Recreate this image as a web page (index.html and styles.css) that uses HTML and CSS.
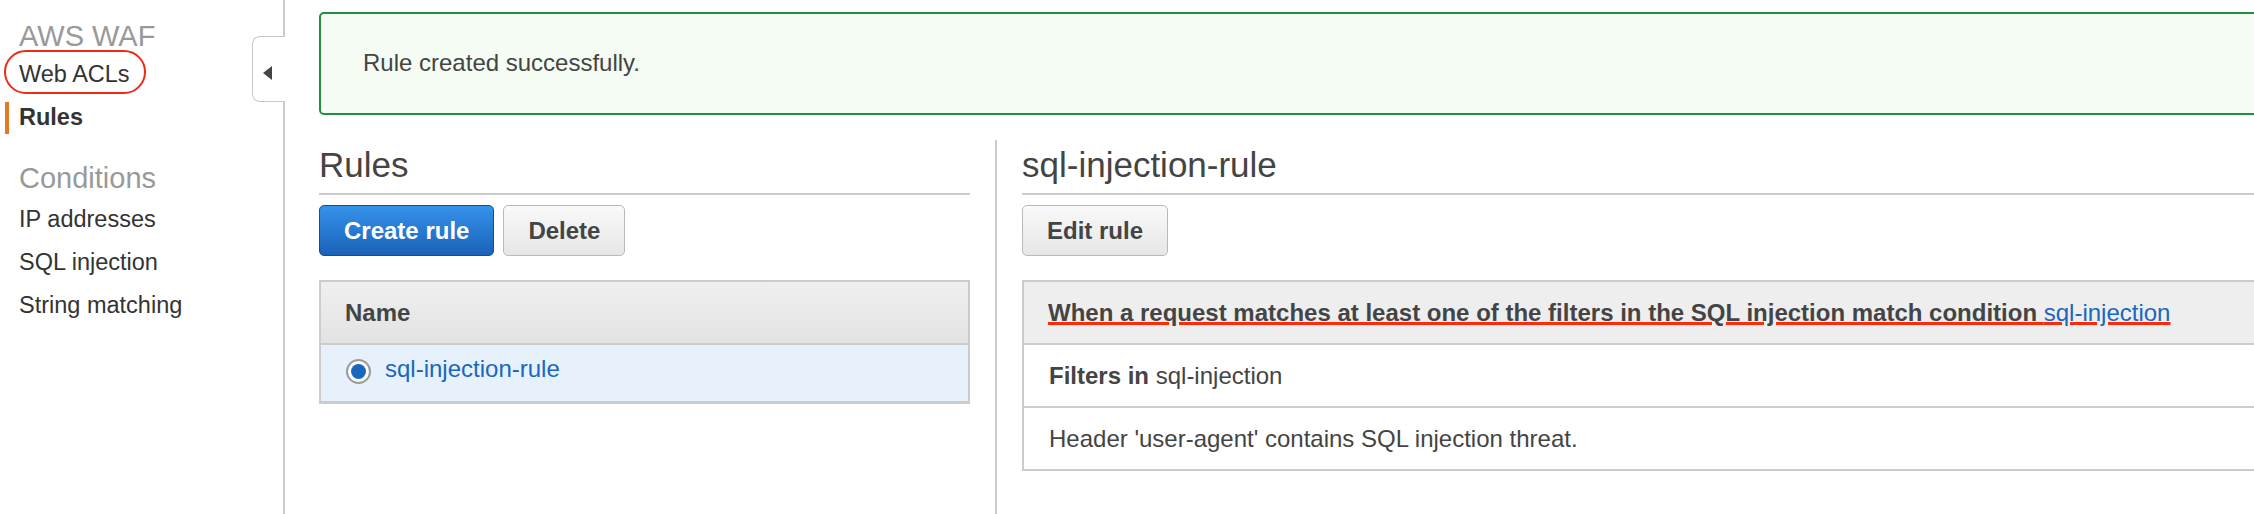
FILE: index.html
```html
<!DOCTYPE html>
<html lang="en">
<head>
<meta charset="utf-8">
<title>AWS WAF - Rules</title>
<link rel="stylesheet" href="styles.css">
</head>
<body>
<div class="app">
  <aside class="sidebar">
    <div class="nav-title">AWS WAF</div>
    <ul class="nav-list">
      <li class="nav-item circled">Web ACLs<span class="annot-circle"></span></li>
      <li class="nav-item active">Rules</li>
    </ul>
    <div class="nav-title conditions">Conditions</div>
    <ul class="nav-list second">
      <li class="nav-item">IP addresses</li>
      <li class="nav-item">SQL injection</li>
      <li class="nav-item">String matching</li>
    </ul>
    <div class="collapse-tab"><span class="tri"></span></div>
  </aside>
  <main class="main">
    <div class="alert">Rule created successfully.</div>
    <div class="columns">
      <section class="col-left">
        <h1 class="heading">Rules</h1>
        <div class="toolbar">
          <button class="btn btn-primary">Create rule</button>
          <button class="btn">Delete</button>
        </div>
        <div class="table">
          <div class="thead">Name</div>
          <div class="trow selected">
            <span class="radio"><span class="dot"></span></span>
            <a class="link">sql-injection-rule</a>
          </div>
        </div>
      </section>
      <section class="col-right">
        <h1 class="heading">sql-injection-rule</h1>
        <div class="toolbar">
          <button class="btn">Edit rule</button>
        </div>
        <div class="table wide">
          <div class="thead flat"><span class="redline">When a request matches at least one of the filters in the SQL injection match condition <a class="link">sql-injection</a></span></div>
          <div class="trow plain"><b>Filters in</b> sql-injection</div>
          <div class="trow plain">Header 'user-agent' contains SQL injection threat.</div>
        </div>
      </section>
    </div>
  </main>
</div>
</body>
</html>
```
FILE: styles.css
```css
html, body {
  margin: 0;
  padding: 0;
  overflow: hidden;
  background: #fff;
}
body {
  font-family: "Liberation Sans", Arial, Helvetica, sans-serif;
  font-size: 24px;
  color: #444;
}
.app {
  display: flex;
  height: 514px;
}
.sidebar {
  position: relative;
  flex: 0 0 285px;
  width: 285px;
  border-right: 2px solid #ccc;
  padding: 20px 0 0 19px;
  box-sizing: border-box;
}
.nav-title {
  font-size: 29px;
  line-height: 32px;
  color: #999;
}
.nav-title.conditions {
  margin-top: 29px;
}
.nav-list {
  list-style: none;
  margin: 6px 0 0 0;
  padding: 0;
}
.nav-list.second {
  margin-top: 9px;
}
.nav-item {
  position: relative;
  font-size: 23.5px;
  line-height: 32px;
  height: 32px;
  margin-bottom: 11px;
  color: #333;
}
.nav-item.active {
  font-weight: bold;
}
.nav-item.active::before {
  content: "";
  position: absolute;
  left: -14px;
  top: 1px;
  width: 4px;
  height: 32px;
  background: #e07b24;
}
.annot-circle {
  position: absolute;
  left: -15px;
  top: -8px;
  width: 142px;
  height: 44px;
  box-sizing: border-box;
  border: 2.5px solid #ec2b17;
  border-radius: 22px;
}
.collapse-tab {
  position: absolute;
  right: -2px;
  top: 36px;
  width: 33px;
  height: 66px;
  box-sizing: border-box;
  background: #fff;
  border: 1.5px solid #c8c8c8;
  border-right: none;
  border-radius: 8px 0 0 8px;
  display: flex;
  align-items: center;
  justify-content: center;
  padding: 8px 4px 0 0;
}
.tri {
  width: 0;
  height: 0;
  border-top: 7.5px solid transparent;
  border-bottom: 7.5px solid transparent;
  border-right: 9px solid #444;
}
.main {
  flex: 1;
  display: flex;
  flex-direction: column;
  padding-left: 34px;
  min-width: 0;
}
.alert {
  margin-top: 12px;
  width: 2400px;
  box-sizing: border-box;
  height: 103px;
  border: 2px solid #1f913b;
  border-radius: 5px;
  background: #f5fcf4;
  padding: 35px 42px 0;
  line-height: 28px;
  color: #444;
}
.columns {
  flex: 1;
  display: flex;
  margin-top: 25px;
}
.col-left {
  flex: 0 0 651px;
  width: 651px;
  margin-right: 25px;
  padding-top: 5px;
}
.col-right {
  flex: 0 0 1400px;
  border-left: 2px solid #ccc;
  padding: 5px 0 0 25px;
}
.heading {
  margin: 0;
  font-size: 35px;
  font-weight: normal;
  line-height: 40px;
  color: #444;
  padding-bottom: 8px;
  border-bottom: 2px solid #ccc;
}
.toolbar {
  display: flex;
  gap: 9px;
  margin-top: 10px;
}
.btn {
  font-family: inherit;
  font-size: 24px;
  font-weight: bold;
  height: 51px;
  line-height: 49px;
  padding: 0 24px;
  border: 1.5px solid #b9b9b9;
  border-radius: 5px;
  background: linear-gradient(#f9f9f9, #e6e6e6);
  color: #444;
}
.btn-primary {
  color: #fff;
  border-color: #164d8e;
  background: linear-gradient(#3592ea, #1a62b8);
}
.table {
  margin-top: 24px;
  border: 2px solid #ccc;
  border-bottom-width: 3px;
}
.table.wide {
  border-bottom-width: 2px;
}
.thead {
  font-weight: bold;
  line-height: 28px;
  padding: 17px 25px 16px 24px;
  background: linear-gradient(#efefef, #e3e3e3);
  border-bottom: 2px solid #ccc;
  color: #444;
}
.thead.flat {
  background: #eee;
}
.trow {
  display: flex;
  align-items: flex-start;
  line-height: 28px;
  padding: 10px 25px 17px;
  background: #fff;
}
.trow.selected {
  background: #e6f1fc;
}
.trow.plain {
  display: block;
  padding: 17px 25px 16px;
  border-bottom: 2px solid #ccc;
}
.trow.plain:last-child {
  border-bottom: none;
}
.trow.plain b {
  font-weight: bold;
}
.radio {
  flex: 0 0 auto;
  width: 25px;
  height: 25px;
  box-sizing: border-box;
  border: 2px solid #9a9a9a;
  border-radius: 50%;
  background: #fff;
  margin-top: 3.5px;
  margin-right: 14px;
  display: flex;
  align-items: center;
  justify-content: center;
}
.dot {
  width: 15px;
  height: 15px;
  border-radius: 50%;
  background: #1a67c0;
}
.link {
  color: #1a66c0;
  font-weight: normal;
  text-decoration: none;
}
.redline {
  text-decoration: underline;
  text-decoration-color: #ff2a0a;
  text-decoration-thickness: 3px;
  text-underline-offset: 1px;
}
```
